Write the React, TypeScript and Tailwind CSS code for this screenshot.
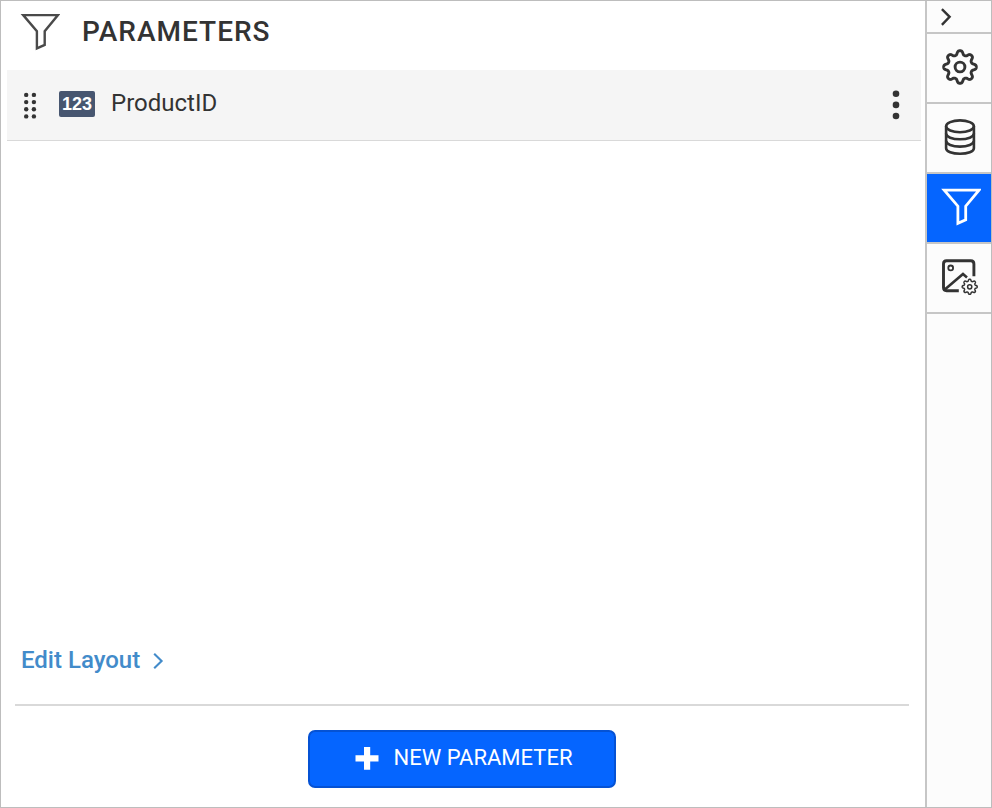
import type { ReactNode } from "react";

function gearPath(cx: number, cy: number, mean: number, amp: number, teeth: number) {
  const steps = 240;
  const pts: string[] = [];
  for (let i = 0; i < steps; i++) {
    const t = (i / steps) * Math.PI * 2;
    const wave = Math.tanh(1.4 * Math.cos(teeth * t)) / Math.tanh(1.4);
    const r = mean + amp * wave;
    pts.push(`${(cx + r * Math.sin(t)).toFixed(2)} ${(cy - r * Math.cos(t)).toFixed(2)}`);
  }
  return `M${pts.join("L")}Z`;
}

function FunnelIcon({ className, strokeWidth }: { className: string; strokeWidth: number }) {
  return (
    <svg width="40" height="39" viewBox="0 0 40 39" fill="none" stroke="currentColor" strokeWidth={strokeWidth} className={className}>
      <path d="M3.2 3.1H38L24.7 19.2V32.9L16.9 36.4V19.2Z" />
    </svg>
  );
}

function GearIcon() {
  return (
    <svg width="38" height="38" viewBox="0 0 38 38" fill="none" stroke="#333" strokeWidth="2.9">
      <path d={gearPath(19, 19, 14.3, 2, 8)} strokeLinejoin="round" />
      <circle cx="19" cy="19" r="4.9" />
    </svg>
  );
}

function DatabaseIcon() {
  return (
    <svg width="38" height="38" viewBox="0 0 38 38" fill="none" stroke="#333" strokeWidth="2.6">
      <ellipse cx="19" cy="8.3" rx="13.9" ry="5.9" />
      <path d="M5.1 8.3V30.2C5.1 33.5 11.3 35.8 19 35.8S32.9 33.5 32.9 30.2V8.3" />
      <path d="M5.1 15.6C5.1 18.9 11.3 21.3 19 21.3S32.9 18.9 32.9 15.6M5.1 22.8C5.1 26.1 11.3 28.6 19 28.6S32.9 26.1 32.9 22.8" />
    </svg>
  );
}

function ImageSettingsIcon() {
  return (
    <svg width="38" height="39" viewBox="0 0 38 39" fill="none" stroke="#333">
      <path d="M17.8 32.7H5.6Q2.5 32.7 2.5 29.6V5.9Q2.5 2.8 5.6 2.8H29.8Q32.9 2.8 32.9 5.9V18.3" strokeWidth="2.9" />
      <path d="M3.8 31.6L22 16L26 19.4" strokeWidth="2.6" />
      <circle cx="9.7" cy="9.9" r="2.4" strokeWidth="1.8" />
      <path d={gearPath(28.7, 28.8, 6.6, 0.9, 8)} strokeWidth="1.5" />
      <circle cx="28.7" cy="28.8" r="2.1" strokeWidth="1.5" />
    </svg>
  );
}

function RailTab({ active, label, children }: { active?: boolean; label: string; children: ReactNode }) {
  return (
    <button
      aria-label={label}
      className={`flex h-[70px] w-full justify-center border-b-2 border-[#c6c6c6] pl-0.5 ${active ? "bg-[#0565ff] pt-[13px]" : "bg-[#fcfcfc] pt-3.5"}`}
    >
      {children}
    </button>
  );
}

export default function App() {
  return (
    <div className="flex h-[808px] w-[992px] overflow-hidden border border-[#bdbdbd] bg-white font-['Roboto',sans-serif] text-[#333]">
      <main className="flex w-[924px] flex-col">
        <header className="flex h-[69px] pt-[11px] pl-[19px]">
          <FunnelIcon className="shrink-0 text-[#4a4a4a]" strokeWidth={2.4} />
          <h1 className="ml-[22px] text-[28px] leading-[39px] font-medium tracking-[1px] whitespace-nowrap">PARAMETERS</h1>
        </header>

        <div className="ml-1.5 flex h-[71px] w-[914px] items-start border-b border-[#d9d9d9] bg-[#f5f5f5]">
          <svg width="14" height="28" viewBox="0 0 14 28" className="mt-[21px] ml-4 shrink-0" fill="#333">
            {[3.9, 11.1, 18.3, 25.4].map((y) => (
              <g key={y}>
                <circle cx="3.2" cy={y} r="2.2" />
                <circle cx="10.9" cy={y} r="2.2" />
              </g>
            ))}
          </svg>
          <span className="mt-[21px] ml-[22px] flex h-[26px] w-9 shrink-0 items-center justify-center rounded-[2px] bg-[#475670] font-['Liberation_Sans',sans-serif] text-[18px] leading-[26px] font-bold text-white">
            123
          </span>
          <span className="ml-4 text-2xl leading-[66px] whitespace-nowrap">ProductID</span>
          <svg width="10" height="32" viewBox="0 0 10 32" className="mt-[19px] mr-5 ml-auto" fill="#333">
            <circle cx="5" cy="4.8" r="3.3" />
            <circle cx="5" cy="15.9" r="3.3" />
            <circle cx="5" cy="27" r="3.3" />
          </svg>
        </div>

        <div className="flex-1" />

        <a className="ml-5 flex h-9 items-center text-2xl font-medium whitespace-nowrap text-[#428bca]">
          Edit Layout
          <svg width="12" height="18" viewBox="0 0 12 18" className="mt-0.5 ml-3" fill="none" stroke="currentColor" strokeWidth="2.1">
            <path d="M2.2 1.7L9.6 9L2.2 16.3" />
          </svg>
        </a>
        <hr className="mt-[26px] ml-3.5 w-[894px] border-t-2 border-[#d9d9d9]" />
        <button className="mt-6 mb-[19px] ml-[307px] flex h-[58px] w-[308px] items-center rounded-[7px] border-2 border-[#0552d4] bg-[#0565ff] pl-[45px] text-[22px] whitespace-nowrap text-white">
          <svg width="24" height="24" viewBox="0 0 24 24" fill="white">
            <path d="M9 0h6.2v8.3h8.3v6.2h-8.3v8.2H9v-8.2H.5V8.3H9z" />
          </svg>
          <span className="mb-0.5 ml-[14.5px] leading-[26px]">NEW PARAMETER</span>
        </button>
      </main>

      <aside className="w-[66px] border-l-2 border-[#c6c6c6] bg-[#fcfcfc]">
        <button aria-label="Collapse" className="flex h-[33px] w-full items-start border-b-2 border-[#c6c6c6] pt-[7px] pl-[13px]">
          <svg width="12" height="18" viewBox="0 0 12 18" fill="none" stroke="#333" strokeWidth="2.4">
            <path d="M1.9 1.2L9.6 8.8L1.9 16.8" />
          </svg>
        </button>
        <RailTab label="Properties"><GearIcon /></RailTab>
        <RailTab label="Data"><DatabaseIcon /></RailTab>
        <RailTab label="Parameters" active><FunnelIcon className="ml-0.5 shrink-0 text-white" strokeWidth={2.8} /></RailTab>
        <RailTab label="Image Manager"><ImageSettingsIcon /></RailTab>
      </aside>
    </div>
  );
}
